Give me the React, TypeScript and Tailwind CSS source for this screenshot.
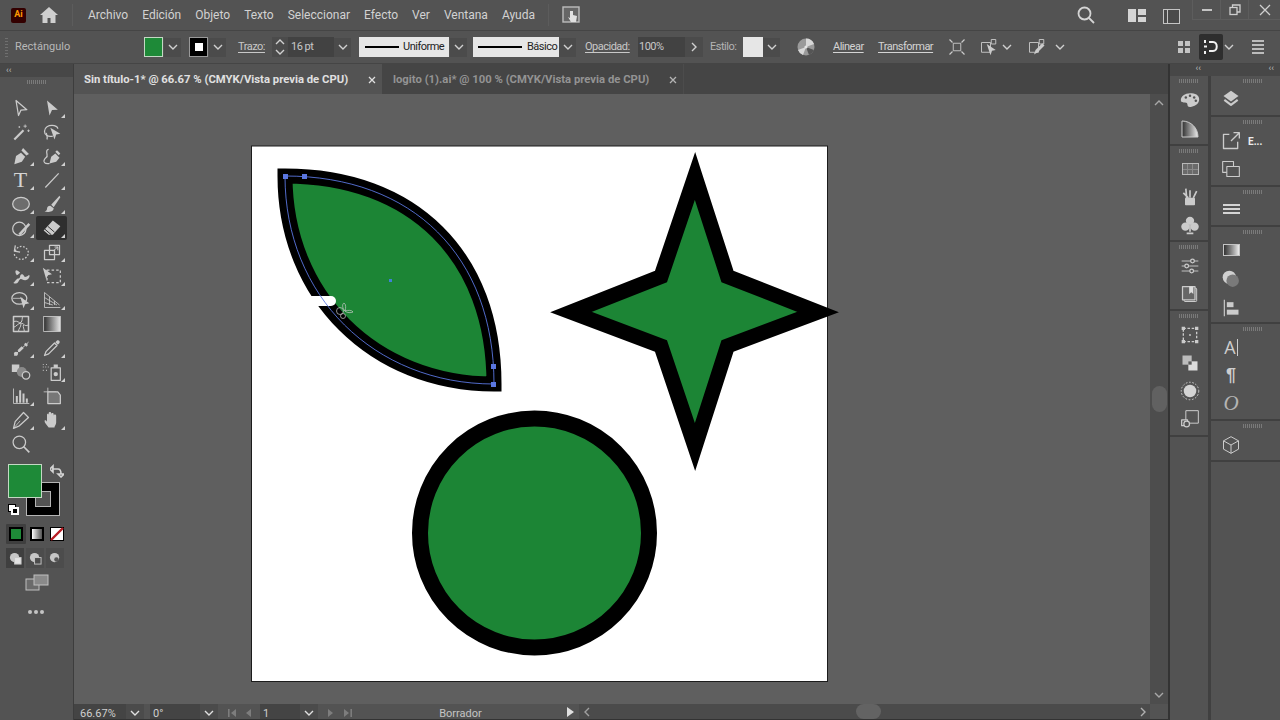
import type { ReactNode } from "react"

const ICON = "#cbcbcb"

function I({ children, s = 20 }: { children: ReactNode; s?: number }) {
  return (
    <svg viewBox="0 0 24 24" width={s} height={s} fill="none" stroke={ICON} strokeWidth={1.5} strokeLinejoin="round">
      {children}
    </svg>
  )
}

function Chev({ dir = "down", c = "#d0d0d0" }: { dir?: "down" | "up" | "right" | "left"; c?: string }) {
  const d = {
    down: "M1 3l4 4 4-4",
    up: "M1 7l4-4 4 4",
    right: "M3 1l4 4-4 4",
    left: "M7 1L3 5l4 4",
  }[dir]
  return (
    <svg viewBox="0 0 10 10" width={10} height={10} fill="none" stroke={c} strokeWidth={1.4}>
      <path d={d} />
    </svg>
  )
}

function Grip() {
  return <div className="mx-auto h-[4px] w-[20px] bg-[repeating-linear-gradient(90deg,#7a7a7a_0_1px,transparent_1px_2px)]" />
}

const F = { fill: ICON, stroke: "none" }

const TOOLS: { icon: ReactNode; corner?: boolean; active?: boolean }[] = [
  { icon: <I><path d="M6 3l13 11-7 .5L9 21z" /></I> },
  { icon: <I><path d="M6 3l13 11-7 .5L9 21z" {...F} /></I>, corner: true },
  { icon: <I><path d="M4 21L15 10" strokeWidth={2.6} /><path d="M17 3v4M15 5h4M21 9v3M19.5 10.5h3M10 5v2M9 6h2" strokeWidth={1} /></I> },
  { icon: <I><path d="M13 17c-6 1-10-1-10-6s5-7 9-7 7 2 7 4" /><path d="M5 13c1 3 2 5 1 8" /><path d="M10 7l12 7-5 1-2 6z" {...F} /></I> },
  { icon: <I><path d="M4 22l2-10 6-4 5 5-4 6z" {...F} /><path d="M12.5 5.5l2-3 7 7-3 2z" {...F} /></I>, corner: true },
  { icon: <I><path d="M9 21l2-8 5-4 5 5-4 5z" {...F} /><path d="M16 7l2-2 4 4-2 2z" {...F} /><path d="M9 21c-6 1-8-2-6-5s4-2 3-6 0-6 2-6" /></I>, corner: true },
  { icon: <span className="font-['Liberation_Serif',serif] text-[22px] leading-none text-[#d4d4d4]">T</span>, corner: true },
  { icon: <I><path d="M4 21L20 4" /></I>, corner: true },
  { icon: <I><ellipse cx="12" cy="12" rx="10" ry="8" fill="#6d6d6d" /></I>, corner: true },
  { icon: <I><path d="M21 2L11 13l3 3L22 4z" {...F} /><path d="M10 14c-3 0-4 2-4 4s-2 3-3 3c3 1 11 1 11-4z" {...F} /></I>, corner: true },
  { icon: <I><circle cx="10" cy="13" r="8" /><path d="M10 20L22 7" strokeWidth={3} /></I>, corner: true },
  { icon: <I><path d="M13 3l9 7-9 10-5 0-6-5z" {...F} /><path d="M3 13l8 7" stroke="#333" strokeWidth={1.2} /><path d="M7 10l8 7" stroke="#333" strokeWidth={1.2} /></I>, corner: true, active: true },
  { icon: <I><path d="M5 11c2-5 7-7 11-5s6 6 4 10-7 6-11 4-5-4-5-6" strokeDasharray="2 2" /><path d="M4 4v7h7" strokeDasharray="none" transform="rotate(10 4 11)" /></I>, corner: true },
  { icon: <I><rect x="3" y="10" width="12" height="11" /><rect x="9" y="4" width="12" height="11" /><path d="M13 11l6-5M15 6h4v4" strokeWidth={1.2} /></I>, corner: true },
  { icon: <I><path d="M3 20c3-2 3-5 6-5s1-5 4-5 2 4 5 3 3-3 4-2-1 6-5 6-4-2-6-1-2 5-5 5-3-1-3-1zM6 5c2 0 3 1 5 3-2 2-4 3-4 3s-3-4-1-6z" {...F} /></I>, corner: true },
  { icon: <I><rect x="6" y="5" width="16" height="15" strokeDasharray="3 2.5" /><path d="M1 2l11 8-5 1-2 5z" {...F} /></I>, corner: true },
  { icon: <I><ellipse cx="10" cy="10" rx="9" ry="7" /><path d="M2 10h12" strokeWidth={1} /><path d="M11 8l11 8-5 1-2 5z" {...F} /></I>, corner: true },
  { icon: <I><path d="M3 3v18h19M3 3l18 15M3 9l15 9M3 15l10 3M9 8v10M15 13v5" strokeWidth={1} /></I>, corner: true },
  { icon: <I><rect x="3" y="3" width="18" height="18" strokeWidth={1.8} /><path d="M3 9c5-2 7 3 9 1s1-5 2-7M3 16c4-1 5-5 9-5s4 5 9 2M9 21c0-4 3-5 3-9M16 21c0-3-2-5-1-8" strokeWidth={1.2} /></I> },
  { icon: (
    <svg viewBox="0 0 24 24" width={20} height={20}>
      <defs>
        <linearGradient id="toolGrad">
          <stop offset="0" stopColor="#2e2e2e" />
          <stop offset="1" stopColor="#e6e6e6" />
        </linearGradient>
      </defs>
      <rect x="2" y="3" width="20" height="18" fill="url(#toolGrad)" stroke="#ccc" />
    </svg>
  ) },
  { icon: <I><path d="M4 21L21 5" strokeWidth={1.2} /><circle cx="6" cy="19" r="2.5" {...F} /><path d="M9 16l5-5" strokeWidth={3.4} /><path d="M17 9l2-2" strokeWidth={4} /></I>, corner: true },
  { icon: <I><path d="M3 21l2-5L15 6l3 3L8 19z" /><path d="M13 5l6 6M16 5l2-2c2-1 4 1 3 3l-2 2z" {...F} /></I>, corner: true },
  { icon: <I><rect x="1" y="3" width="9" height="9" {...F} /><circle cx="13" cy="12" r="6" fill="#8a8a8a" stroke="none" /><circle cx="18" cy="16" r="4.5" fill="#535353" /></I> },
  { icon: <I><path d="M1 6h1M4 6h1M7 6h1M1 10h1M5 10h1M1 3h1M5 3h1" strokeWidth={1.4} /><rect x="11" y="7" width="11" height="15" /><path d="M14 7V3h5v4" {...F} /><circle cx="16.5" cy="14.5" r="2.6" {...F} /></I>, corner: true },
  { icon: <I><path d="M3 3v18h19" strokeWidth={1} /><path d="M7 20v-8M11 20V5M15 20V9M19 20v-5" strokeWidth={2.4} /></I>, corner: true },
  { icon: <I><path d="M2 7h15v14h5M7 2v5" strokeWidth={1} /><path d="M7 7h12l3 4v10H7z" fill="#777" /></I> },
  { icon: <I><path d="M3 22l2-8L15 3l6 6-11 10z" /><path d="M3 22l8-9" strokeWidth={1} /></I>, corner: true },
  { icon: <I><path d="M8 21c-2-3-5-5-5-8 0-1 2-1 3 1V6c0-2 2-2 2 0V4c0-2 3-2 3 0v1c0-2 3-2 3 0v2c0-2 3-2 3 0v8c0 3-2 4-2 6z" {...F} /></I>, corner: true },
  { icon: <I><circle cx="10" cy="10" r="7.5" /><path d="M15 15l7 7" strokeWidth={2} /></I> },
  { icon: null },
]

function ToolCell({ icon, corner, active }: (typeof TOOLS)[number]) {
  return (
    <div className={`relative flex h-[24px] w-[31px] items-center justify-center ${active ? "rounded-[2px] bg-[#2f2f2f]" : ""}`}>
      {icon}
      {corner ? <span className="absolute bottom-[2px] right-[2px] h-0 w-0 border-b-[4px] border-l-[4px] border-b-[#d0d0d0] border-l-transparent" /> : null}
    </div>
  )
}

function ToolPanel() {
  return (
    <div className="flex w-[74px] flex-col border-r border-[#3d3d3d] bg-[#535353]">
      <div className="flex h-[13px] items-center bg-[#474747] pl-[6px] text-[9px] leading-none text-[#bdbdbd]">‹‹</div>
      <div className="pt-[3px]"><Grip /></div>
      <div className="ml-[5px] mt-[12px] grid w-[62px] grid-cols-2">
        {TOOLS.map((t, i) => <ToolCell key={i} {...t} />)}
      </div>
      <div className="relative ml-[8px] mt-[8px] h-[52px] w-[52px]">
        <div className="absolute left-[18px] top-[18px] flex h-[34px] w-[34px] items-center justify-center border border-[#b5b5b5] bg-black">
          <div className="h-[16px] w-[16px] border border-[#b5b5b5] bg-[#535353]" />
        </div>
        <div className="absolute left-0 top-0 h-[34px] w-[34px] border border-[#c4d8c4] bg-[#1e8a38]" />
        <svg className="absolute left-[42px] top-0" viewBox="0 0 14 14" width={14} height={14} fill="none" stroke="#d4d4d4" strokeWidth={1.6}>
          <path d="M2 5h6c2 0 3 2 3 5M0 5l3-3v6zM11 13l-3-3h6z" />
        </svg>
        <div className="absolute left-0 top-[40px] h-[8px] w-[8px] border border-black bg-white" />
        <div className="absolute left-[3px] top-[43px] h-[8px] w-[8px] border-2 border-white bg-black" />
      </div>
      <div className="ml-[6px] mt-[8px] flex w-[60px] gap-[2px]">
        <div className="flex h-[20px] w-[20px] items-center justify-center rounded-[1px] bg-[#3f3f3f]">
          <div className="h-[14px] w-[14px] border-2 border-black bg-[#1e8a38]" />
        </div>
        <div className="flex h-[20px] w-[18px] items-center justify-center">
          <div className="h-[14px] w-[14px] border-2 border-black bg-gradient-to-r from-white to-[#555]" />
        </div>
        <div className="flex h-[20px] w-[18px] items-center justify-center">
          <svg viewBox="0 0 14 14" width={14} height={14}>
            <rect width="14" height="14" fill="#fff" stroke="#000" strokeWidth="2" />
            <path d="M1 13L13 1" stroke="#b81c24" strokeWidth="2.4" />
          </svg>
        </div>
      </div>
      <div className="ml-[6px] mt-[4px] flex w-[60px] gap-[2px]">
        {["#3f3f3f", "#4c4c4c", "#4c4c4c"].map((bg, i) => (
          <div key={i} style={{ background: bg }} className="flex h-[20px] w-[18px] items-center justify-center">
            <svg viewBox="0 0 14 14" width={13} height={13}>
              <circle cx="6" cy="6" r="5" fill="#c6c6c6" />
              {i < 2 ? <rect x="6" y="6" width="7" height="7" fill={i === 0 ? "#e2e2e2" : "#4c4c4c"} stroke="#c6c6c6" /> : <circle cx="8" cy="8" r="2.4" fill="#555" />}
            </svg>
          </div>
        ))}
      </div>
      <div className="ml-[25px] mt-[6px] h-[18px]">
        <svg viewBox="0 0 24 18" width={24} height={18} fill="#6b6b6b" stroke="#c0c0c0" strokeWidth={1}>
          <rect x="1" y="5" width="13" height="11" />
          <rect x="9" y="1" width="14" height="10" fill="#8a8a8a" />
        </svg>
      </div>
      <div className="mt-[18px] flex justify-center gap-[2px] pr-[1px]">
        {[0, 1, 2].map((i) => <span key={i} className="h-[4px] w-[4px] rounded-full bg-[#c4c4c4]" />)}
      </div>
    </div>
  )
}

function TitleBar() {
  const menu = ["Archivo", "Edición", "Objeto", "Texto", "Seleccionar", "Efecto", "Ver", "Ventana", "Ayuda"]
  return (
    <div className="flex h-[30px] items-center bg-[#535353]">
      <div className="ml-[11px] flex h-[15px] w-[15px] items-center justify-center rounded-[2px] bg-[#330000] text-[9px] font-bold text-[#ff9a00]">Ai</div>
      <div className="ml-[14px] flex w-[18px] items-center justify-center">
        <svg viewBox="0 0 18 16" width={18} height={16} fill="#cfcfcf">
          <path d="M9 0L0 8h2.5v8h5v-5h3v5h5V8H18z" />
        </svg>
      </div>
      <div className="ml-[14px] h-[22px] w-px bg-[#5c5c5c]" />
      <div className="ml-[15px] flex w-[447px] justify-between pb-[1px] text-[12px] text-[#d2d2d2]">
        {menu.map((m) => <span key={m}>{m}</span>)}
      </div>
      <div className="ml-[13px] h-[22px] w-px bg-[#5c5c5c]" />
      <div className="ml-[13px]">
        <svg viewBox="0 0 18 18" width={18} height={18} fill="none">
          <rect x="1" y="1" width="16" height="15" stroke="#bdbdbd" strokeWidth="1.4" fill="#666" />
          <path d="M8 5v7l-2-1 3 5h5l1-6-4-1V5z" fill="#e0e0e0" />
        </svg>
      </div>
      <div className="ml-auto flex h-full items-start">
        <div className="mr-[33px] mt-[6px]">
          <svg viewBox="0 0 18 18" width={18} height={18} fill="none" stroke="#d4d4d4" strokeWidth={1.8}>
            <circle cx="7.5" cy="7.5" r="6" />
            <path d="M12 12l5 5" />
          </svg>
        </div>
        <div className="mr-[17px] mt-[9px] grid h-[13px] w-[18px] grid-cols-2 gap-[2px]">
          <div className="row-span-2 bg-[#d4d4d4]" />
          <div className="bg-[#d4d4d4]" />
          <div className="bg-[#d4d4d4]" />
        </div>
        <div className="mr-[12px] mt-[9px] flex h-[15px] w-[17px] border border-[#c4c4c4] bg-[#4a4a4a]">
          <div className="h-full w-[4px] border-r border-[#c4c4c4]" />
        </div>
        <div className="flex h-[20px] border-b border-l border-[#5d5d5d]">
          <div className="flex w-[28px] items-center justify-center border-r border-[#5d5d5d]">
            <div className="h-[2px] w-[10px] bg-[#c4c4c4]" />
          </div>
          <div className="flex w-[28px] items-center justify-center border-r border-[#5d5d5d]">
            <svg viewBox="0 0 12 12" width={12} height={12} fill="none" stroke="#cfcfcf" strokeWidth={1.3}>
              <rect x="1" y="3.5" width="7" height="7" />
              <path d="M3.5 3.5V1H11v7H8" />
            </svg>
          </div>
          <div className="flex w-[31px] items-center justify-center">
            <svg viewBox="0 0 12 12" width={12} height={12} stroke="#cfcfcf" strokeWidth={1.3}>
              <path d="M1 1l10 10M11 1L1 11" />
            </svg>
          </div>
        </div>
      </div>
    </div>
  )
}

function Drop({ className = "" }: { className?: string }) {
  return <div className={`flex h-[19px] w-[17px] items-center justify-center bg-[#4b4b4b] ${className}`}><Chev /></div>
}

function ControlBar() {
  return (
    <div className="flex h-[34px] items-center whitespace-nowrap border-y border-[#454545] bg-[#535353] text-[11px] tracking-[-0.5px] text-[#c8c8c8]">
      <div className="ml-[5px] h-[20px] w-[3px] bg-[repeating-linear-gradient(0deg,#6f6f6f_0_1px,transparent_1px_3px)]" />
      <span className="ml-[7px] w-[129px] tracking-normal text-[#b8b8b8]">Rectángulo</span>
      <div className="h-[20px] w-[19px] border border-[#c4d8c4] bg-[#1e8a38]" />
      <Drop className="ml-[1px]" />
      <div className="ml-[8px] flex h-[20px] w-[19px] items-center justify-center border border-[#999] bg-black">
        <div className="h-[8px] w-[8px] bg-white" />
      </div>
      <Drop className="ml-[1px]" />
      <span className="ml-[12px] w-[29px] underline underline-offset-2">Trazo:</span>
      <div className="ml-[5px] flex h-[20px] w-[16px] flex-col items-center justify-center bg-[#4b4b4b]">
        <Chev dir="up" />
        <Chev />
      </div>
      <div className="flex h-[20px] w-[46px] items-center bg-[#424242] pl-[3px]">16 pt</div>
      <Drop />
      <div className="ml-[8px] flex h-[20px] w-[90px] items-center bg-[#e6e6e6] pl-[6px] text-[#222]">
        <div className="h-[2px] w-[34px] bg-black" />
        <span className="ml-[4px]">Uniforme</span>
      </div>
      <Drop className="ml-[1px]" />
      <div className="ml-[6px] flex h-[20px] w-[86px] items-center bg-[#e6e6e6] pl-[5px] text-[#222]">
        <div className="h-[2px] w-[44px] bg-black" />
        <span className="ml-[5px]">Básico</span>
      </div>
      <Drop />
      <span className="ml-[9px] w-[45px] underline underline-offset-2">Opacidad:</span>
      <div className="ml-[8px] flex h-[20px] w-[47px] items-center bg-[#424242] pl-[1px]">100%</div>
      <div className="flex h-[20px] w-[18px] items-center justify-center bg-[#4b4b4b]"><Chev dir="right" /></div>
      <span className="ml-[7px] w-[26px] text-[#b4b4b4]">Estilo:</span>
      <div className="ml-[7px] h-[20px] w-[20px] bg-[#e6e6e6]" />
      <Drop />
      <div className="ml-[17px]">
        <svg viewBox="0 0 18 18" width={18} height={18}>
          <circle cx="9" cy="9" r="8.5" fill="#9a9a9a" />
          <path d="M9 9L9 .5A8.5 8.5 0 0 1 17 6zM9 9L1 12a8.5 8.5 0 0 0 5 5z" fill="#d8d8d8" />
          <path d="M9 9l8 3a8.5 8.5 0 0 1-5 5z" fill="#555" />
          <circle cx="9" cy="9" r="1.6" fill="#e4e4e4" />
        </svg>
      </div>
      <span className="ml-[18px] w-[30px] underline underline-offset-2 text-[#d4d4d4]">Alinear</span>
      <span className="ml-[15px] w-[53px] underline underline-offset-2 text-[#d4d4d4]">Transformar</span>
      <div className="ml-[17px]">
        <I s={18}>
          <rect x="7" y="7" width="10" height="10" strokeWidth={1.2} />
          <path d="M2 2l4 4M22 2l-4 4M2 22l4-4M22 22l-4-4" strokeWidth={1.6} />
        </I>
      </div>
      <div className="ml-[14px]">
        <I s={18}>
          <rect x="2" y="6" width="12" height="13" strokeWidth={1.2} />
          <rect x="15" y="2" width="6" height="6" strokeWidth={1.2} />
          <path d="M9 8l12 8-5 1-2 6z" {...F} />
        </I>
      </div>
      <div className="ml-[4px]"><Chev /></div>
      <div className="ml-[16px]">
        <I s={18}>
          <rect x="2" y="6" width="12" height="13" strokeWidth={1.2} />
          <rect x="15" y="2" width="6" height="6" strokeWidth={1.2} />
          <path d="M8 22l2-6 9-9 3 3-9 9z" {...F} />
        </I>
      </div>
      <div className="ml-[9px]"><Chev /></div>
      <div className="ml-[113px] grid h-[12px] w-[12px] grid-cols-2 gap-[2px]">
        {[0, 1, 2, 3].map((i) => <div key={i} className="bg-[#c4c4c4]" />)}
      </div>
      <div className="ml-[9px] flex h-[26px] w-[24px] items-center justify-center rounded-[2px] bg-[#2e2e2e]">
        <svg viewBox="0 0 16 16" width={16} height={16} fill="none" stroke="#f0f0f0" strokeWidth={2}>
          <path d="M2 1v3M2 12v3M6 3h4c5 0 5 9 0 9H6" />
          <path d="M1 7.5h3" />
        </svg>
      </div>
      <div className="ml-[1px]"><Chev /></div>
      <div className="ml-[18px] flex w-[12px] flex-col gap-[2px]">
        {[0, 1, 2, 3].map((i) => <div key={i} className="h-[2px] bg-[#bcbcbc]" />)}
      </div>
    </div>
  )
}

function TabBar() {
  return (
    <div className="flex h-[30px] items-stretch bg-[#454545] text-[11.3px] font-bold">
      <div className="flex w-[308px] items-center justify-between bg-[#535353] pl-[10px] pr-[6px] pt-[2px] text-[#e0e0e0]">
        <span>Sin título-1* @ 66.67 % (CMYK/Vista previa de CPU)</span>
        <Chev2 c="#e0e0e0" />
      </div>
      <div className="flex w-[302px] items-center justify-between border-r border-[#4c4c4c] pl-[11px] pr-[6px] pt-[2px] text-[#939393]">
        <span>logito (1).ai* @ 100 % (CMYK/Vista previa de CPU)</span>
        <Chev2 c="#b4b4b4" />
      </div>
    </div>
  )
}

function Chev2({ c }: { c: string }) {
  return (
    <svg viewBox="0 0 8 8" width={8} height={8} stroke={c} strokeWidth={1.3}>
      <path d="M1 1l6 6M7 1L1 7" />
    </svg>
  )
}

function Artwork() {
  const green = "#1c8535"
  const blue = "#5a76e0"
  const leaf = "M285 176C413 176 494 256 494 384C374 384 285 296 285 176Z"
  return (
    <svg viewBox="251 146 577 536" width={577} height={536} className="absolute left-[177px] top-[52px] overflow-visible">
      <rect x="251.5" y="146" width="576" height="535.5" fill="#fff" stroke="#1c1c1c" />
      <path d={leaf} fill={green} stroke="#000" strokeWidth="15" strokeMiterlimit="10" />
      <path d="M695 176L727.5 276.5L818 312L727.5 346L695 447L661 346L571 312L661 276.5Z" fill={green} stroke="#000" strokeWidth="15" strokeMiterlimit="20" />
      <circle cx="534.5" cy="533" r="114.5" fill={green} stroke="#000" strokeWidth="16" />
      <rect x="300" y="296" width="36" height="10" rx="5" fill="#fff" />
      <path d={leaf} fill="none" stroke={blue} strokeWidth="0.9" />
      <rect x="283" y="174" width="5" height="5" fill={blue} />
      <rect x="302" y="174" width="5" height="5" fill={blue} />
      <rect x="491" y="364" width="5" height="5" fill={blue} />
      <rect x="491" y="382" width="5" height="5" fill={blue} />
      <rect x="389" y="279" width="3" height="3" fill="#3f80d8" />
      <g fill="none" stroke="#c8c8c8" strokeWidth="0.7">
        <path d="M345 311c-3-3-3-7-1-8 2 1 2 5 1 8zM345 311c3-1 7-1 8 1-2 1-6 1-8-1z" />
        <circle cx="340" cy="311" r="3.5" />
        <circle cx="343" cy="316" r="2.5" />
      </g>
    </svg>
  )
}

function StatusBar() {
  const field = "flex h-full items-center bg-[#444] pt-[5px] text-[11px] text-[#cfcfcf]"
  const gray = "#7d7d7d"
  return (
    <div className="flex h-[16px] items-stretch overflow-hidden border-b border-[#333] bg-[#535353]">
      <div className={`${field} w-[52px] pl-[6px]`}>66.67%</div>
      <div className="flex w-[18px] items-center justify-center bg-[#4b4b4b] pt-[3px]"><Chev c="#e0e0e0" /></div>
      <div className={`${field} ml-[6px] w-[50px] pl-[3px]`}>0°</div>
      <div className="flex w-[18px] items-center justify-center bg-[#4b4b4b] pt-[3px]"><Chev c="#e0e0e0" /></div>
      <div className="ml-[9px] flex w-[26px] items-center justify-between pt-[2px]">
        <svg viewBox="0 0 10 10" width={10} height={10} fill={gray}><path d="M1 1h1.6v8H1zM9 1v8L4 5z" /></svg>
        <svg viewBox="0 0 10 10" width={10} height={10} fill={gray}><path d="M8 1v8L3 5z" /></svg>
      </div>
      <div className={`${field} ml-[7px] w-[40px] pl-[3px]`}>1</div>
      <div className="flex w-[18px] items-center justify-center bg-[#4b4b4b] pt-[3px]"><Chev c="#e0e0e0" /></div>
      <div className="ml-[8px] flex w-[27px] items-center justify-between pt-[2px]">
        <svg viewBox="0 0 10 10" width={10} height={10} fill={gray}><path d="M2 1v8l5-4z" /></svg>
        <svg viewBox="0 0 10 10" width={10} height={10} fill={gray}><path d="M9 1H7.4v8H9zM1 1v8l5-4z" /></svg>
      </div>
      <div className="flex w-[208px] items-center justify-center pl-[7px] pt-[5px] text-[11px] text-[#c4c4c4]">Borrador</div>
      <div className="flex w-[18px] items-center justify-center">
        <svg viewBox="0 0 10 10" width={10} height={10} fill="#e0e0e0"><path d="M2 0v10l7-5z" /></svg>
      </div>
      <div className="flex w-[16px] items-center justify-center bg-[#4b4b4b]"><Chev dir="left" c="#a0a0a0" /></div>
      <div className="relative flex-1 bg-[#4b4b4b]">
        <div className="absolute left-[261px] top-0 h-[15px] w-[25px] rounded-full bg-[#636363]" />
        <div className="absolute right-[2px] top-[3px]"><Chev dir="right" c="#b0b0b0" /></div>
      </div>
      <div className="w-[18px] bg-[#535353]" />
    </div>
  )
}

function Col({ className, children }: { className: string; children: ReactNode }) {
  return <div className={`bg-[#535353] ${className}`}>{children}</div>
}

function Panel({ top, className, h = "h-[28px]", left, icons }: { top: string; className: string; h?: string; left?: boolean; icons: ReactNode[] }) {
  return (
    <Col className={className}>
      <div className={`pt-[3px] ${left ? "pl-[14px]" : ""}`}><Grip /></div>
      <div className={top}>
        {icons.map((ic, i) => (
          <div key={i} className={`flex items-center ${h} ${left ? "justify-start pl-[10px]" : "justify-center pl-[2px]"}`}>
            {ic}
          </div>
        ))}
      </div>
    </Col>
  )
}

function IconBox({ children }: { children: ReactNode }) {
  return <div className="flex w-[20px] items-center justify-center">{children}</div>
}

function RightPanels() {
  return (
    <div className="flex w-[112px] flex-col border-l-2 border-[#333] bg-[#404040]">
      <div className="flex h-[12px] bg-[#474747] text-[9px] leading-none text-[#bdbdbd]">
        <span className="w-[39px] pr-[8px] text-right">‹‹</span>
        <span className="flex-1 pr-[6px] text-right">‹‹</span>
      </div>
      <div className="flex flex-1 gap-[3px]">
        <div className="flex w-[38px] flex-col gap-[2px]">
          <Panel top="pt-[2px]" className="h-[68px]" h="h-[29px]" icons={[
            <I key="p"><path d="M12 4C6 4 1 8 1 12c0 3 3 3 5 3s3 1 3 3 2 3 5 2c5-1 9-4 9-9s-5-7-11-7z" {...F} /><circle cx="7" cy="9" r="1.5" fill="#535353" stroke="none" /><circle cx="12" cy="7" r="1.5" fill="#535353" stroke="none" /><circle cx="17" cy="9" r="1.5" fill="#535353" stroke="none" /><circle cx="19" cy="13" r="1.5" fill="#535353" stroke="none" /></I>,
            <svg key="g" viewBox="0 0 20 20" width={20} height={20}>
              <defs>
                <linearGradient id="cornerGrad">
                  <stop offset="0" stopColor="#2e2e2e" />
                  <stop offset="1" stopColor="#ececec" />
                </linearGradient>
              </defs>
              <path d="M2 18V2c9 0 16 7 16 16z" fill="url(#cornerGrad)" stroke="#ccc" />
            </svg>,
          ]} />
          <Panel top="pt-[2px]" className="h-[94px]" icons={[
            <div key="s" className="grid h-[12px] w-[17px] grid-cols-3 gap-px border border-[#b8b8b8] bg-[#8a8a8a]">
              {[0, 1, 2, 3, 4, 5].map((i) => <div key={i} className="bg-[#6a6a6a]" />)}
            </div>,
            <I key="b"><rect x="6" y="13" width="12" height="9" rx="1" {...F} /><path d="M8 13L7 2M12 13V4M16 13l4-8M10 13L4 7" strokeWidth={2} /></I>,
            <I key="c"><circle cx="12" cy="7" r="5" {...F} /><circle cx="6.5" cy="14" r="5" {...F} /><circle cx="17.5" cy="14" r="5" {...F} /><path d="M12 12v8M8 22h8" strokeWidth={2} /></I>,
          ]} />
          <Panel top="pt-[3px]" className="h-[67px]" icons={[
            <I key="sl"><path d="M2 6h20M2 12h20M2 18h20" strokeWidth={1.1} /><circle cx="15" cy="6" r="2.2" fill="#535353" /><circle cx="8" cy="12" r="2.2" fill="#535353" /><circle cx="14" cy="18" r="2.2" fill="#535353" /></I>,
            <I key="bk"><rect x="5" y="5" width="15" height="16" rx="1" strokeWidth={1.2} /><rect x="3" y="3" width="15" height="16" fill="#666" /><path d="M11 3h5v9l-2.5-2-2.5 2z" fill="#ddd" stroke="none" /></I>,
          ]} />
          <Panel top="pt-[3px]" className="h-[124px]" icons={[
            <I key="t"><rect x="4" y="4" width="16" height="16" strokeDasharray="3 2" strokeWidth={1.6} /><path d="M2 2h4v4H2zM18 2h4v4h-4zM2 18h4v4H2zM18 18h4v4h-4z" {...F} /><rect x="11" y="11" width="2" height="2" {...F} /></I>,
            <I key="pf"><rect x="3" y="3" width="11" height="11" fill="#bcbcbc" stroke="none" /><rect x="10" y="10" width="11" height="11" fill="#dcdcdc" stroke="none" /><rect x="10" y="10" width="4" height="4" fill="#5a5a5a" stroke="none" /></I>,
            <I key="ap"><circle cx="12" cy="12" r="10.5" strokeDasharray="2 2" strokeWidth={1.2} /><circle cx="12" cy="12" r="7.5" fill="#d4d4d4" stroke="none" /></I>,
            <I key="lk"><rect x="7" y="2" width="15" height="15" strokeWidth={1.2} /><rect x="2" y="13" width="7" height="7" fill="#535353" /><circle cx="8" cy="18" r="3.4" fill="#535353" /></I>,
          ]} />
          <div className="flex-1 bg-[#535353]" />
        </div>
        <div className="flex flex-1 flex-col gap-[2px]">
          <Panel left top="pt-[2px]" className="h-[39px]" icons={[
            <I key="l"><path d="M12 2l9 6.5-9 6.5-9-6.5z" {...F} /><path d="M4 13l8 6 8-6" strokeWidth={2.6} /></I>,
          ]} />
          <Panel left top="pt-[3px]" className="h-[68px]" icons={[
            <div key="e" className="flex items-center">
              <I>
                <path d="M10 4H3v17h17v-8" strokeWidth={1.6} />
                <path d="M12 12L22 2M15 2h7v7" strokeWidth={1.6} />
              </I>
              <span className="ml-[7px] text-[10px] font-bold text-[#ececec]">E...</span>
            </div>,
            <I key="cp">
              <rect x="2" y="3" width="13" height="13" strokeWidth={1.3} />
              <rect x="7" y="9" width="15" height="12" fill="#535353" strokeWidth={1.3} />
            </I>,
          ]} />
          <Panel left top="pt-[1px]" className="h-[38px]" icons={[
            <IconBox key="m">
              <div className="flex w-[17px] flex-col gap-[2px]">
                {[0, 1, 2].map((i) => <div key={i} className="h-[2px] bg-[#d4d4d4]" />)}
              </div>
            </IconBox>,
          ]} />
          <Panel left top="pt-[1px]" className="h-[95px]" h="h-[29px]" icons={[
            <IconBox key="g"><div className="h-[12px] w-[17px] border border-[#c4c4c4] bg-gradient-to-r from-[#333] to-[#ececec]" /></IconBox>,
            <I key="tr"><circle cx="10" cy="10" r="8" fill="#d0d0d0" stroke="none" /><circle cx="14" cy="14" r="7.5" fill="#7a7a7a" stroke="none" /></I>,
            <I key="al"><path d="M4 2v20" strokeWidth={1.4} /><rect x="7" y="5" width="8" height="6" {...F} /><rect x="7" y="14" width="14" height="6" {...F} /></I>,
          ]} />
          <Panel left top="pt-[2px]" className="h-[95px]" icons={[
            <IconBox key="a">
              <span className="font-['Open_Sans',sans-serif] text-[18px] leading-none text-[#cdcdcd]">A</span>
              <span className="ml-[1px] h-[17px] w-px bg-[#cdcdcd]" />
            </IconBox>,
            <IconBox key="pi"><span className="font-['Liberation_Sans',sans-serif] text-[18px] font-bold leading-none text-[#cdcdcd]">¶</span></IconBox>,
            <IconBox key="o"><span className="font-['Liberation_Serif',serif] text-[21px] italic leading-none text-[#b4b4b4]">O</span></IconBox>,
          ]} />
          <Panel left top="pt-[3px]" className="h-[39px]" icons={[
            <I key="cube"><path d="M12 2l9 5v10l-9 5-9-5V7zM3 7l9 5 9-5M12 12v10" strokeWidth={1.2} /></I>,
          ]} />
          <div className="flex-1 bg-[#535353]" />
        </div>
      </div>
    </div>
  )
}

export default function App() {
  return (
    <div className="flex h-[720px] w-[1280px] flex-col overflow-hidden bg-[#535353] font-['Roboto',sans-serif]">
      <TitleBar />
      <ControlBar />
      <div className="flex min-h-0 flex-1">
        <ToolPanel />
        <div className="flex w-[1094px] flex-col">
          <TabBar />
          <div className="flex min-h-0 flex-1">
            <div className="relative flex-1 overflow-hidden bg-[#5f5f5f]">
              <Artwork />
            </div>
            <div className="flex w-[18px] flex-col items-center justify-between bg-[#4d4d4d] py-[4px]">
              <Chev dir="up" c="#a8a8a8" />
              <div className="h-[26px] w-[15px] rounded-full bg-[#616161]" />
              <Chev c="#a8a8a8" />
            </div>
          </div>
          <StatusBar />
        </div>
        <RightPanels />
      </div>
    </div>
  )
}
